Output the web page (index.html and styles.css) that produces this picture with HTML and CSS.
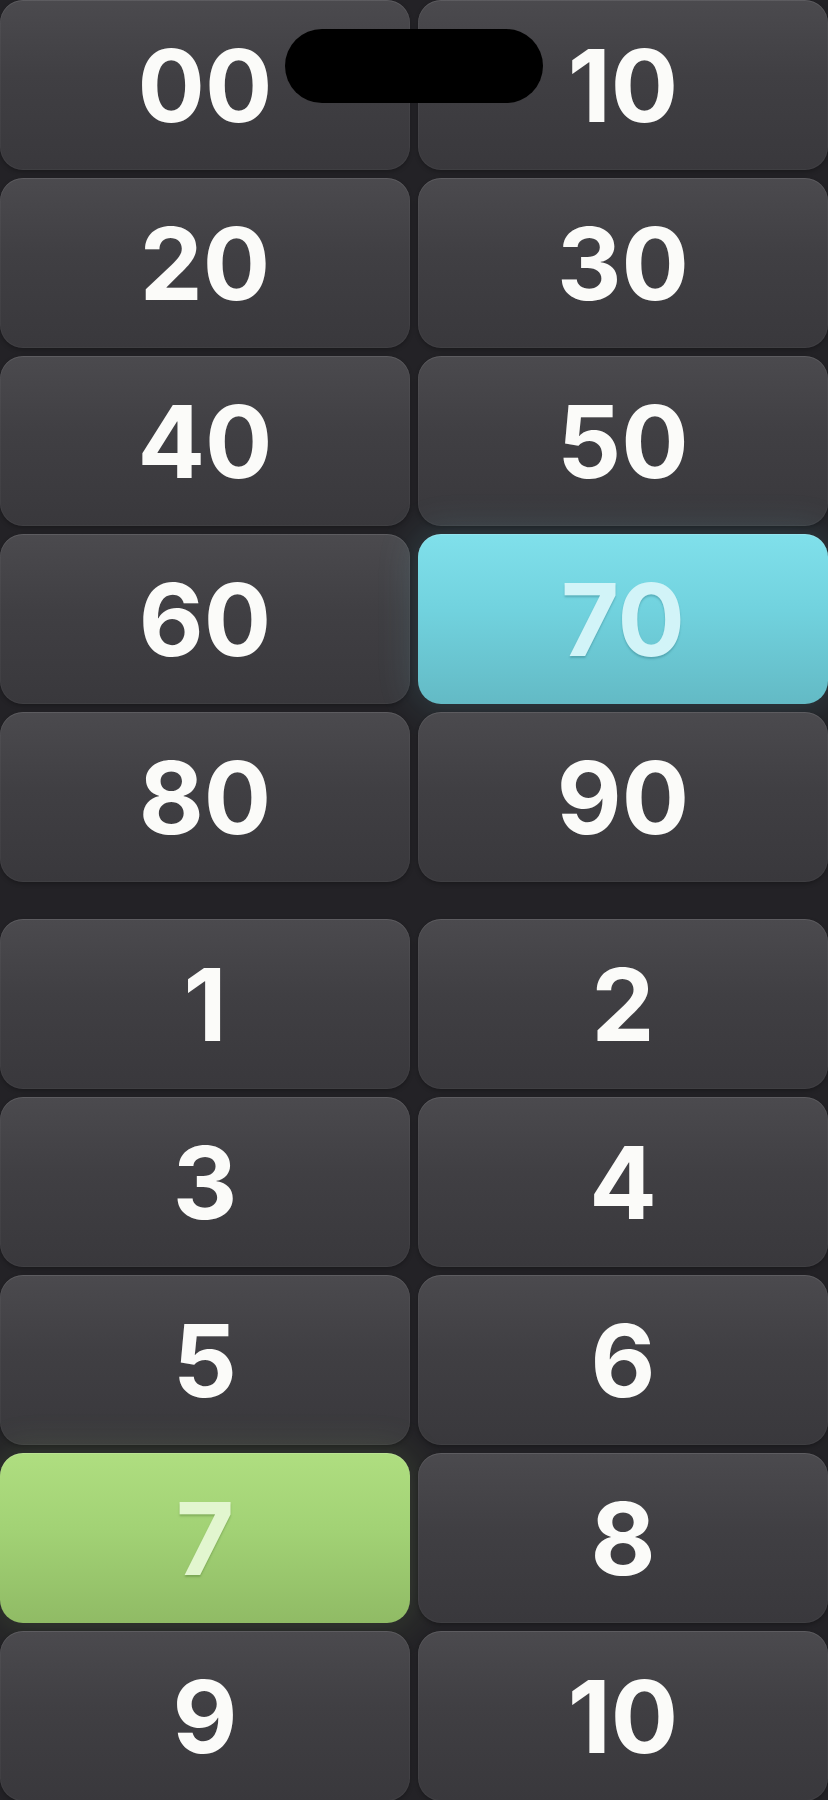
FILE: index.html
```html
<!DOCTYPE html>
<html>
<head>
<meta charset="utf-8">
<link rel="stylesheet" href="styles.css">
</head>
<body>
<div class="screen">
  <div class="island"></div>
  <div class="group">
    <div class="key"><span>00</span></div>
    <div class="key"><span>10</span></div>
    <div class="key"><span>20</span></div>
    <div class="key"><span>30</span></div>
    <div class="key"><span>40</span></div>
    <div class="key"><span>50</span></div>
    <div class="key"><span>60</span></div>
    <div class="key key-cyan"><span>70</span></div>
    <div class="key"><span>80</span></div>
    <div class="key"><span>90</span></div>
  </div>
  <div class="group">
    <div class="key"><span>1</span></div>
    <div class="key"><span>2</span></div>
    <div class="key"><span>3</span></div>
    <div class="key"><span>4</span></div>
    <div class="key"><span>5</span></div>
    <div class="key"><span>6</span></div>
    <div class="key key-green"><span>7</span></div>
    <div class="key"><span>8</span></div>
    <div class="key"><span>9</span></div>
    <div class="key"><span>10</span></div>
  </div>
</div>
</body>
</html>
```

FILE: styles.css
```css
html, body {
  margin: 0;
  padding: 0;
  background: #232226;
}

.screen {
  position: relative;
  width: 828px;
  height: 1800px;
  overflow: hidden;
  display: flex;
  flex-direction: column;
  gap: 37px;
  font-family: Inter, "Liberation Sans", sans-serif;
}

.island {
  position: absolute;
  left: 285px;
  top: 29px;
  width: 258px;
  height: 74px;
  border-radius: 37px;
  background: #000;
  z-index: 5;
}

.group {
  display: grid;
  grid-template-columns: 410px 410px;
  grid-auto-rows: 170px;
  column-gap: 8px;
  row-gap: 8px;
}

.key {
  display: flex;
  align-items: center;
  justify-content: center;
  border-radius: 23px;
  background: linear-gradient(180deg, #4b4a4e 0%, #403f43 45%, #39383c 100%);
  box-shadow: inset 0 1px 0 rgba(255, 255, 255, 0.07), inset 0 0 0 1px rgba(255, 255, 255, 0.035), 0 2px 4px rgba(0, 0, 0, 0.25);
  color: #fbfbf9;
  font-size: 100px;
  font-weight: 700;
  letter-spacing: 0;
  line-height: 1;
}

.key span {
  display: block;
  margin-top: 2px;
}

.key-cyan {
  background: linear-gradient(180deg, #80e0eb 0%, #71d2de 45%, #63bac5 100%);
  box-shadow: inset 0 1px 0 rgba(255, 255, 255, 0.15), 0 0 36px 6px rgba(110, 200, 215, 0.16);
  color: #d2f4f8;
  text-shadow: 0 2px 2px rgba(40, 110, 120, 0.35);
}

.key-green {
  background: linear-gradient(180deg, #afde80 0%, #a2d275 45%, #90bb65 100%);
  box-shadow: inset 0 1px 0 rgba(255, 255, 255, 0.15), 0 0 36px 6px rgba(160, 210, 110, 0.14);
  color: #e2f6cf;
  text-shadow: 0 2px 2px rgba(70, 110, 40, 0.35);
}
```
